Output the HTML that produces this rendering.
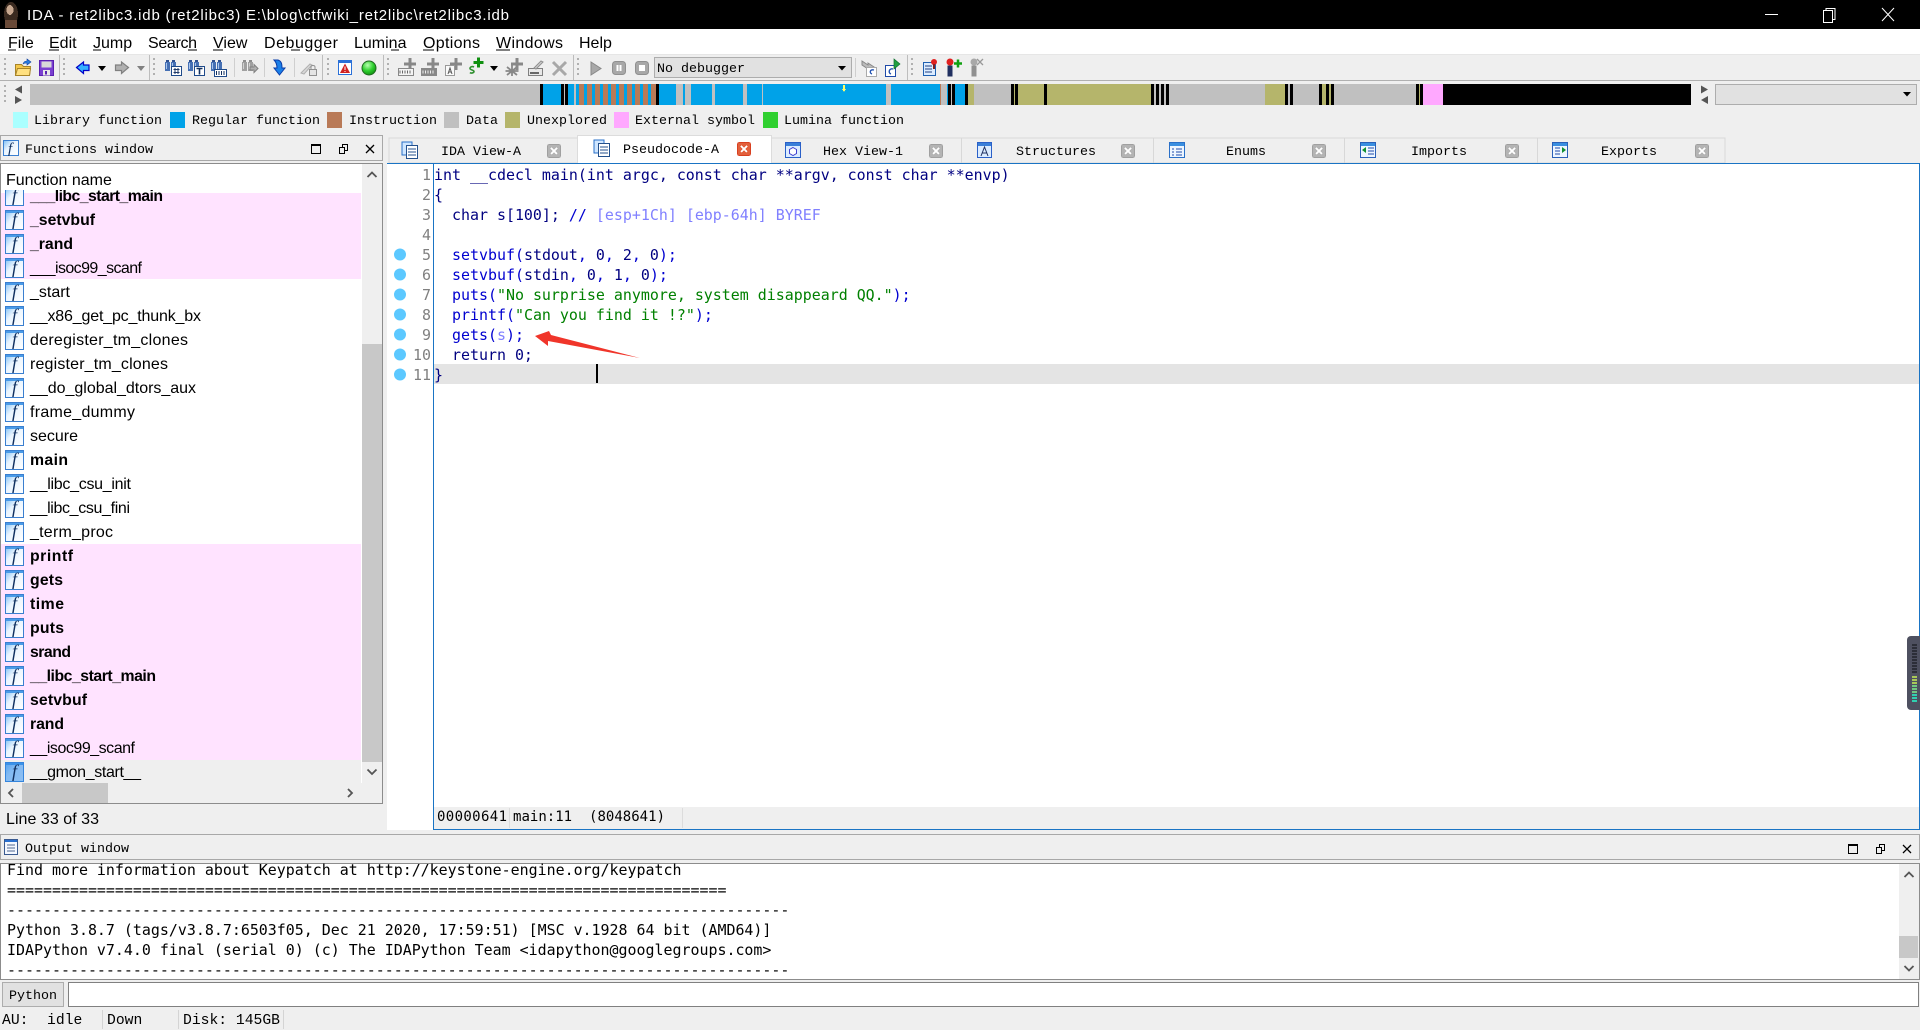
<!DOCTYPE html>
<html><head><meta charset="utf-8"><title>IDA</title>
<style>
html,body{margin:0;padding:0;width:1920px;height:1030px;overflow:hidden;background:#efefef}
svg{display:block;position:absolute;left:0;top:0}
text{white-space:pre}
.m{font:14.95px "DejaVu Sans Mono","Liberation Mono",monospace}
.l{font:13.33px "Liberation Mono",monospace;fill:#000}
.o{font:14.95px "DejaVu Sans Mono","Liberation Mono",monospace;fill:#000}
.s{font:16px "Liberation Sans",sans-serif;fill:#000}
.b{font:bold 15.8px "Liberation Sans",sans-serif;fill:#000}
.u{font:16px "Liberation Sans",sans-serif;fill:#000}
.f{font:italic 18px "Liberation Serif",serif;fill:#103060}
.n{fill:#808080;text-anchor:end}
.k{fill:#000080}.c{fill:#0000d0}.g{fill:#008000}.p{fill:#8080ff}
.a{fill:#c0c0c0}.B{fill:#00a2e8}.R{fill:#b97a57}.O{fill:#b5b56b}.K{fill:#000}
</style></head><body>
<svg width="1920" height="1030" viewBox="0 0 1920 1030" shape-rendering="crispEdges">
<defs>
<linearGradient id="fg" x1="0" y1="0" x2="1" y2="1"><stop offset="0" stop-color="#7fc0f4"/><stop offset=".4" stop-color="#e8f4ff"/><stop offset="1" stop-color="#ffffff"/></linearGradient>
<g id="fb"><rect x=".5" y=".5" width="18" height="19" fill="url(#fg)" stroke="#3a7fd0"/><rect x="1" y="1" width="17" height="2" fill="#4a9be8"/></g>
<g id="doc"><rect x="0" y="0" width="10" height="13" fill="#cfe6ff" stroke="#2a70c8"/><rect x="4.500" y="3.500" width="11" height="13" fill="#fff" stroke="#24508c"/><path d="M6 7h8M6 10h8M6 13h8" stroke="#24508c" fill="none"/></g>
<g id="cl"><rect x=".5" y=".5" width="13" height="13" rx="2" fill="#b4b4b4" stroke="#a0a0a0"/><path d="M4 4l6 6M10 4l-6 6" stroke="#fff" stroke-width="2" fill="none"/></g>
<g id="bin"><rect x="0" y="0" width="5" height="9" fill="#4670b4"/><rect x="6" y="0" width="5" height="9" fill="#4670b4"/><rect x="1" y="-2" width="3" height="2" fill="#2f5090"/><rect x="7" y="-2" width="3" height="2" fill="#2f5090"/><rect x="1" y="1" width="1" height="6" fill="#a8c4ec"/><rect x="7" y="1" width="1" height="6" fill="#a8c4ec"/></g>
<g id="plus"><path d="M-6 0h12M0 -6v12" stroke="#888" stroke-width="3" fill="none"/></g>
</defs>

<!-- title -->
<rect width="1920" height="29" fill="#000"/>
<ellipse cx="11" cy="14" rx="7" ry="12" fill="#3a2a20"/><ellipse cx="10" cy="10" rx="3.500" ry="5" fill="#c8a890"/><rect x="5" y="20" width="12" height="8" fill="#6a4a38"/>
<text x="27" y="20" textLength="482" style="font:15px 'Liberation Sans',sans-serif" fill="#fff">IDA - ret2libc3.idb (ret2libc3) E:\blog\ctfwiki_ret2libc\ret2libc3.idb</text>
<path d="M1765 14.500h13" stroke="#fff"/>
<path d="M1823.500 10.500h9v12h-9zM1826 10V8.500h9v11h-2" stroke="#fff" fill="none"/>
<path d="M1882 8l12 13M1894 8l-12 13" stroke="#fff" fill="none" shape-rendering="auto"/>

<!-- menu -->
<rect y="29" width="1920" height="25" fill="#fff"/>
<rect y="54" width="1920" height="1" fill="#e6e6e6"/>
<g class="u">
<text class="u" x="8" y="48">File</text><path d="M8 50h8" stroke="#000"/>
<text class="u" x="49" y="48">Edit</text><path d="M49 50h10" stroke="#000"/>
<text class="u" x="93" y="48">Jump</text><path d="M93 50h8" stroke="#000"/>
<text class="u" x="148" y="48" textLength="49">Search</text><path d="M188 50h9" stroke="#000"/>
<text class="u" x="213" y="48">View</text><path d="M213 50h10" stroke="#000"/>
<text class="u" x="264" y="48" textLength="74">Debugger</text><path d="M291 50h9" stroke="#000"/>
<text class="u" x="354" y="48">Lumina</text><path d="M391 50h8" stroke="#000"/>
<text class="u" x="423" y="48" textLength="57">Options</text><path d="M423 50h11" stroke="#000"/>
<text class="u" x="496" y="48" textLength="67">Windows</text><path d="M496 50h14" stroke="#000"/>
<text class="u" x="579" y="48">Help</text>
</g>

<!-- toolbar -->
<rect y="80" width="1920" height="1" fill="#b0b0b0"/>
<g stroke="#b4b4b4" fill="none">
<path d="M59.500 55v25M149.500 55v25M322.500 55v25M383.500 55v25M573.500 55v25M907.500 55v25" stroke="#bdbdbd"/>
<path d="M234.500 58v19M264.500 58v19M294.500 58v19M855.500 58v19" stroke="#cfcfcf"/>
</g>
<g stroke="#b0b0b0" stroke-width="2" stroke-dasharray="2 3" fill="none">
<path d="M5 58v20M64 58v20M154 58v20M328 58v20M388 58v20M578 58v20M912 58v20M5 85v20"/>
</g>
<g shape-rendering="auto">
<!-- folder -->
<path d="M15.500 64.500h6l2 2h7l-1 9h-14z" fill="#f4c84a" stroke="#a88428"/><path d="M15.500 75.500l2-7h13l-1 7z" fill="#ffe080" stroke="#a88428"/>
<path d="M23 64c1-3 3-3 4-3v-2l4 3-4 3v-2c-1 0-3 0-4 1z" fill="#2a7fe0" stroke="#1040a0" stroke-width=".6"/>
<!-- save -->
<rect x="39.500" y="60.500" width="14" height="15" fill="#7a3fd0" stroke="#5a20b0"/><rect x="41.500" y="61.500" width="10" height="6" fill="#d8d8d8"/><rect x="43" y="70" width="7" height="5.500" fill="#e8e8e8"/><rect x="45" y="71" width="2" height="3.500" fill="#5a20b0"/>
<!-- back / forward -->
<path d="M76.500 67.500l7-5.500v3h5.500v5.500h-5.500v3z" fill="#35b0ff" stroke="#0000c8" stroke-width="1.200"/>
<path d="M98 66h8l-4 5z" fill="#000"/>
<path d="M128.500 67.500l-7-5.500v3h-6v5.500h6v3z" fill="#b0b0b0" stroke="#808080" stroke-width="1.200"/>
<path d="M137 66h8l-4 5z" fill="#808080"/>
<!-- binoculars -->
<use href="#bin" x="165" y="62"/><rect x="171.500" y="66.500" width="10" height="9" fill="#fff" stroke="#1f4a8a"/><path d="M173.500 69.500h6M173.500 72.500h6M175 68v6M178 68v6" stroke="#1f3a6a"/>
<use href="#bin" x="188" y="62"/><rect x="194.500" y="66.500" width="10" height="9" fill="#fff" stroke="#1f4a8a"/><path d="M196.500 68.500h6M199.500 68.500v6" stroke="#123060" stroke-width="1.600"/>
<use href="#bin" x="211" y="62"/><rect x="214.500" y="69.500" width="12" height="7" fill="#fff" stroke="#1f4a8a"/><path d="M216.500 71v4M219 71v4M221.500 71v4M224 71v4" stroke="#123060"/>
<g style="filter:grayscale(1)" opacity=".6"><use href="#bin" x="242" y="62"/></g><path d="M250 67h4v-2.500l4 4-4 4v-2.500h-4z" fill="#b0b0b0" stroke="#808080"/>
<!-- down arrow -->
<path d="M274 60h4c3 1 4 3 4 8h3l-5.500 7-5.500-7h3c0-3-1-6-3-8z" fill="#1a7fe8" stroke="#0a3ca8"/>
<!-- pencil lock -->
<path d="M301 73l9-9 2 1-8 9z" fill="#d8d8d8" stroke="#b0b0b0"/><rect x="309.500" y="69.500" width="7" height="6" fill="#e4e4e4" stroke="#909090"/><path d="M311 69v-2c0-2 4-2 4 0v2" stroke="#909090" fill="none"/>
<!-- warn window -->
<rect x="338.500" y="60.500" width="13" height="14" fill="#fff" stroke="#2a70d8"/><rect x="339" y="61" width="12" height="2" fill="#2a70d8"/><path d="M345 63.500l5 9.500h-10z" fill="#d02020"/><path d="M345 66.500v3.500M345 71v1" stroke="#fff"/>
<!-- green -->
<radialGradient id="gr" cx=".4" cy=".3" r=".8"><stop offset="0" stop-color="#b8ffb0"/><stop offset=".5" stop-color="#30d030"/><stop offset="1" stop-color="#088008"/></radialGradient>
<circle cx="369" cy="68" r="7" fill="url(#gr)" stroke="#206820"/>
<!-- CODE DATA A -->
<use href="#plus" x="410" y="64"/><rect x="398.500" y="68.500" width="15" height="7" fill="#f4f4f4" stroke="#888"/><path d="M400 70.500v3M402.500 70.500v3M405 70.500v3M407.500 70.500v3M410 70.500v3" stroke="#666"/>
<use href="#plus" x="433" y="64"/><rect x="421.500" y="68.500" width="15" height="7" fill="#888" stroke="#888"/><path d="M423 70.500v3M425.500 70.500v3M428 70.500v3M430.500 70.500v3M433 70.500v3" stroke="#eee"/>
<use href="#plus" x="456" y="64"/><rect x="445.500" y="65.500" width="9" height="10" fill="#fafafa" stroke="#999"/><path d="M448 74l2-6 2 6M449 72h2" stroke="#555" fill="none"/>
<path d="M478.500 57.500v10M473.500 62.500h10" stroke="#109010" stroke-width="3" fill="none"/>
<path d="M474 67c-2-1-4 0-4 1.500s4 1.500 4 3-3 2-4 1" stroke="#309030" stroke-width="1.600" fill="none"/>
<path d="M490 66h8l-4 5z" fill="#000"/>
<use href="#plus" x="517" y="64"/><path d="M507 67l10 8M517 67l-10 8M512 65v11M505.500 71h13" stroke="#888" stroke-width="1.800" fill="none"/>
<path d="M528.500 68.500h14v7h-14z" fill="#e8e8e8" stroke="#808080"/><path d="M530 73h9" stroke="#666" stroke-width="2"/><path d="M534 68l7-7 2 1-7 7z" fill="#d0d0d0" stroke="#909090"/>
<path d="M553 62l13 13M566 62l-13 13" stroke="#a8a8a8" stroke-width="3" fill="none"/>
<!-- debugger -->
<path d="M591 62v13l10-6.500z" fill="#a8a8a8" stroke="#888"/>
<rect x="612.500" y="61.500" width="13" height="13" rx="3" fill="#a8a8a8" stroke="#909090"/><path d="M617.500 65v6M620.500 65v6" stroke="#fff" stroke-width="2"/>
<rect x="635.500" y="61.500" width="13" height="13" rx="3" fill="#a8a8a8" stroke="#909090"/><rect x="639" y="65" width="6" height="6" fill="#fff"/>
<path d="M862 61l6 4v-2l6 4-6 4v-2l-6-4z" fill="#bbb" stroke="#888"/><rect x="866.500" y="67.500" width="10" height="9" fill="#fff" stroke="#aaa"/><path d="M874 70c-4-1-5 3-2 4" stroke="#2050b0" stroke-width="1.300" fill="none"/>
<rect x="885.500" y="65.500" width="10" height="11" fill="#fff" stroke="#1f4aa8"/><path d="M893 69c-4-1-5 4-2 5" stroke="#2050b0" stroke-width="1.400" fill="none"/><path d="M894 59v10l6-5z" fill="#20a040" stroke="#107030" stroke-width=".7"/>
<rect x="923.500" y="62.500" width="12" height="13" fill="#dcecff" stroke="#2060b0"/><path d="M925 66h7M925 69h7M925 72h7" stroke="#204080"/><circle cx="934" cy="62" r="3" fill="#e02020"/><path d="M934 64v5" stroke="#802020" stroke-width="2"/>
<circle cx="950" cy="62" r="3.500" fill="#e02020"/><rect x="947.500" y="65.500" width="5" height="11" fill="#203060"/><path d="M958 59.500v8M954 63.500h8" stroke="#10a010" stroke-width="2.500" fill="none"/>
<circle cx="974" cy="62" r="3.500" fill="#a8a8a8"/><rect x="971.500" y="65.500" width="5" height="11" fill="#909090"/><path d="M977 59l6 6M983 59l-6 6" stroke="#999" stroke-width="1.300" fill="none"/>
</g>
<rect x="654.500" y="57.500" width="197" height="20" fill="#e1e1e1" stroke="#adadad"/>
<text class="l" x="657" y="72">No debugger</text>
<path d="M838 66h8l-4 4.500z" fill="#000" shape-rendering="auto"/>

<!-- nav -->
<path d="M22 85.500v8l-7-4z" fill="#555" shape-rendering="auto"/><path d="M15 96v8l7-4z" fill="#555" shape-rendering="auto"/>
<rect x="30" y="84" width="1661" height="21" class="a"/>
<g>
<path class="B" d="M543 84h18v21h-18zM568 84h6v21h-6zM576 84h80v21h-80zM659 84h17v21h-17zM683 84h2v21h-2zM691 84h21v21h-21zM715 84h28v21h-28zM747 84h15v21h-15zM763 84h123v21h-123zM891 84h49v21h-49zM947 84h1v21h-1zM955 84h10v21h-10z"/>
<path class="R" d="M579 84h5v21h-5zM587 84h5v21h-5zM595 84h5v21h-5zM603 84h5v21h-5zM611 84h5v21h-5zM619 84h5v21h-5zM627 84h5v21h-5zM635 84h5v21h-5zM643 84h5v21h-5zM651 84h5v21h-5zM940 84h1v21h-1z"/>
<path class="O" d="M968 84h6v21h-6zM1014 84h1v21h-1zM1018 84h133v21h-133zM1265 84h20v21h-20zM1322 84h9v21h-9zM1419 84h1v21h-1z"/>
<path class="K" d="M540 84h3v21h-3zM561 84h3v21h-3zM565 84h3v21h-3zM656 84h3v21h-3zM948 84h3v21h-3zM952 84h3v21h-3zM965 84h3v21h-3zM1011 84h3v21h-3zM1015 84h3v21h-3zM1044 84h3v21h-3zM1151 84h3v21h-3zM1156 84h3v21h-3zM1161 84h3v21h-3zM1166 84h3v21h-3zM1285 84h3v21h-3zM1290 84h3v21h-3zM1319 84h3v21h-3zM1326 84h3v21h-3zM1331 84h3v21h-3zM1416 84h3v21h-3zM1420 84h3v21h-3zM1443 84h248v21h-248z"/>
<path d="M1423 84h20v21h-20z" fill="#ffa8ff"/>
<path d="M843 85h2v4h1l-2 3-2-3h1z" fill="#ffff66"/>
</g>
<path d="M1701 85.500v8l7-4z" fill="#555" shape-rendering="auto"/><path d="M1708 96v8l-7-4z" fill="#555" shape-rendering="auto"/>
<rect x="1715.500" y="84.500" width="201" height="20" fill="#e1e1e1" stroke="#adadad"/>
<path d="M1903 92h8l-4 4.500z" fill="#000" shape-rendering="auto"/>

<!-- legend -->
<rect x="13" y="112" width="15" height="16" fill="#aaffff"/><text class="l" x="34" y="124">Library function</text>
<rect x="170" y="112" width="15" height="16" fill="#00a2e8"/><text class="l" x="192" y="124">Regular function</text>
<rect x="327" y="112" width="15" height="16" fill="#b97a57"/><text class="l" x="349" y="124">Instruction</text>
<rect x="444" y="112" width="15" height="16" fill="#c0c0c0"/><text class="l" x="466" y="124">Data</text>
<rect x="505" y="112" width="15" height="16" fill="#b5b56b"/><text class="l" x="527" y="124">Unexplored</text>
<rect x="614" y="112" width="15" height="16" fill="#ffa8ff"/><text class="l" x="635" y="124">External symbol</text>
<rect x="763" y="112" width="15" height="16" fill="#30d030"/><text class="l" x="784" y="124">Lumina function</text>

<!-- functions window -->
<rect x=".5" y="135.500" width="382" height="25" fill="#efefef" stroke="#a8a8a8"/>
<g shape-rendering="auto"><rect x="3.500" y="140.500" width="15" height="15" fill="url(#fg)" stroke="#3a7fd0"/><text class="f" x="8" y="153" style="font-size:15px">f</text></g>
<text class="l" x="25" y="153">Functions window</text>
<path d="M311.500 144.500h9v9h-9zM311 145.500h10" stroke="#000" fill="none"/>
<path d="M339.500 147.500h5v6h-5zM342.500 147v-2.500h5v6h-3" stroke="#000" fill="none"/>
<path d="M366 145l8 8M374 145l-8 8" stroke="#000" stroke-width="1.300" fill="none" shape-rendering="auto"/>

<rect x=".5" y="163.500" width="382" height="640" fill="#fff" stroke="#8c8c8c"/>
<rect x="1" y="193" width="360" height="86" fill="#ffe3ff"/>
<rect x="1" y="544" width="360" height="216" fill="#ffe3ff"/>
<rect x="1" y="760" width="360" height="23" fill="#efefef"/>
<rect x="362" y="164" width="20" height="619" fill="#efefef"/>
<rect x="362" y="344" width="20" height="418" fill="#c8c8c8"/>
<rect x="1" y="783" width="381" height="20" fill="#efefef"/>
<rect x="22" y="783" width="86" height="20" fill="#c8c8c8"/>
<g fill="none" stroke="#555" stroke-width="1.800" shape-rendering="auto">
<path d="M367.500 177l4.500-4.500 4.500 4.500M367.500 769.500l4.500 4.500 4.500-4.500M13 789l-4 4 4 4M348 789l4 4-4 4"/>
</g>
<g shape-rendering="auto">
<svg x="0" y="190" width="362" height="600" viewBox="0 190 362 600" overflow="hidden">
<use href="#fb" x="5" y="186"/><text class="f" x="12" y="201">f</text><text class="b" x="30" y="201" textLength="133">___libc_start_main</text>
</svg>
<use href="#fb" x="5" y="210"/><text class="f" x="12" y="225">f</text><text class="b" x="30" y="225" textLength="65">_setvbuf</text>
<use href="#fb" x="5" y="234"/><text class="f" x="12" y="249">f</text><text class="b" x="30" y="249" textLength="43">_rand</text>
<use href="#fb" x="5" y="258"/><text class="f" x="12" y="273">f</text><text class="s" x="30" y="273" textLength="112">___isoc99_scanf</text>
<use href="#fb" x="5" y="282"/><text class="f" x="12" y="297">f</text><text class="s" x="30" y="297" textLength="40">_start</text>
<use href="#fb" x="5" y="306"/><text class="f" x="12" y="321">f</text><text class="s" x="30" y="321" textLength="171">__x86_get_pc_thunk_bx</text>
<use href="#fb" x="5" y="330"/><text class="f" x="12" y="345">f</text><text class="s" x="30" y="345" textLength="158">deregister_tm_clones</text>
<use href="#fb" x="5" y="354"/><text class="f" x="12" y="369">f</text><text class="s" x="30" y="369" textLength="138">register_tm_clones</text>
<use href="#fb" x="5" y="378"/><text class="f" x="12" y="393">f</text><text class="s" x="30" y="393" textLength="166">__do_global_dtors_aux</text>
<use href="#fb" x="5" y="402"/><text class="f" x="12" y="417">f</text><text class="s" x="30" y="417" textLength="105">frame_dummy</text>
<use href="#fb" x="5" y="426"/><text class="f" x="12" y="441">f</text><text class="s" x="30" y="441" textLength="48">secure</text>
<use href="#fb" x="5" y="450"/><text class="f" x="12" y="465">f</text><text class="b" x="30" y="465" textLength="38">main</text>
<use href="#fb" x="5" y="474"/><text class="f" x="12" y="489">f</text><text class="s" x="30" y="489" textLength="101">__libc_csu_init</text>
<use href="#fb" x="5" y="498"/><text class="f" x="12" y="513">f</text><text class="s" x="30" y="513" textLength="100">__libc_csu_fini</text>
<use href="#fb" x="5" y="522"/><text class="f" x="12" y="537">f</text><text class="s" x="30" y="537" textLength="83">_term_proc</text>
<use href="#fb" x="5" y="546"/><text class="f" x="12" y="561">f</text><text class="b" x="30" y="561" textLength="43">printf</text>
<use href="#fb" x="5" y="570"/><text class="f" x="12" y="585">f</text><text class="b" x="30" y="585" textLength="33">gets</text>
<use href="#fb" x="5" y="594"/><text class="f" x="12" y="609">f</text><text class="b" x="30" y="609" textLength="34">time</text>
<use href="#fb" x="5" y="618"/><text class="f" x="12" y="633">f</text><text class="b" x="30" y="633" textLength="34">puts</text>
<use href="#fb" x="5" y="642"/><text class="f" x="12" y="657">f</text><text class="b" x="30" y="657" textLength="41">srand</text>
<use href="#fb" x="5" y="666"/><text class="f" x="12" y="681">f</text><text class="b" x="30" y="681" textLength="126">__libc_start_main</text>
<use href="#fb" x="5" y="690"/><text class="f" x="12" y="705">f</text><text class="b" x="30" y="705" textLength="57">setvbuf</text>
<use href="#fb" x="5" y="714"/><text class="f" x="12" y="729">f</text><text class="b" x="30" y="729" textLength="34">rand</text>
<use href="#fb" x="5" y="738"/><text class="f" x="12" y="753">f</text><text class="s" x="30" y="753" textLength="105">__isoc99_scanf</text>
<use href="#fb" x="5" y="762"/><rect x="5" y="762" width="19" height="20" fill="#2f8be8" opacity=".55"/><text class="f" x="12" y="777">f</text><text class="s" x="30" y="777" textLength="111">__gmon_start__</text>
</g>
<rect x="1" y="164" width="361" height="26" fill="#fff"/>
<text class="u" x="6" y="185">Function name</text>
<text class="u" x="6" y="824" textLength="93">Line 33 of 33</text>

<!-- tabs -->
<rect x="389" y="138" width="1336" height="25" fill="#efefef" stroke="#d8d8d8"/>
<path d="M771.500 138v25M961.500 138v25M1153.500 138v25M1344.500 138v25M1537.500 138v25" stroke="#d8d8d8"/>
<rect x="577.500" y="135.500" width="194" height="28" fill="#fff" stroke="#dcdcdc"/>
<g shape-rendering="auto">
<use href="#doc" x="402" y="142"/>
<use href="#doc" x="594" y="140"/>
<rect x="785.500" y="142.500" width="15" height="15" fill="#dcecff" stroke="#2a60c8"/><rect x="786" y="143" width="14" height="3" fill="#3a7fd8"/><path d="M793 147.500l3.500 2v4l-3.500 2-3.500-2v-4z" fill="#fff" stroke="#4040d0"/>
<rect x="977.500" y="142.500" width="14" height="15" fill="#dcecff" stroke="#2a60c8"/><rect x="978" y="143" width="13" height="3" fill="#3a7fd8"/><path d="M981 156l3.500-9 3.500 9M982 153h5" fill="none" stroke="#203060"/>
<rect x="1169.500" y="142.500" width="15" height="15" fill="#eef6ff" stroke="#2a70c8"/><rect x="1170" y="143" width="14" height="3" fill="#3a8fe0"/><path d="M1172 149h2M1176 149h6M1172 152h2M1176 152h6M1172 155h2M1176 155h6" stroke="#1f4aa8"/>
<rect x="1360.500" y="142.500" width="15" height="15" fill="#eef6ff" stroke="#2a60b8"/><rect x="1361" y="143" width="14" height="3" fill="#3a8fe0"/><path d="M1368 148h6M1368 151h6M1368 154h6" stroke="#1f4aa8"/><path d="M1366 147l-4 3 4 3z" fill="#109030"/>
<rect x="1552.500" y="142.500" width="15" height="15" fill="#eef6ff" stroke="#2a60b8"/><rect x="1553" y="143" width="14" height="3" fill="#3a8fe0"/><path d="M1555 148h5M1555 151h5M1555 154h5" stroke="#1f4aa8"/><path d="M1562 147l4 3-4 3z" fill="#109030"/>
</g>
<text class="l" x="441" y="155">IDA View-A</text>
<text class="l" x="623" y="153">Pseudocode-A</text>
<text class="l" x="823" y="155">Hex View-1</text>
<text class="l" x="1016" y="155">Structures</text>
<text class="l" x="1226" y="155">Enums</text>
<text class="l" x="1411" y="155">Imports</text>
<text class="l" x="1601" y="155">Exports</text>
<use href="#cl" x="547" y="144"/>
<g transform="translate(737 142)"><rect x=".5" y=".5" width="13" height="13" rx="2" fill="#e2603c" stroke="#d84020"/><path d="M4 4l6 6M10 4l-6 6" stroke="#fff" stroke-width="2" fill="none"/></g>
<use href="#cl" x="929" y="144"/><use href="#cl" x="1121" y="144"/><use href="#cl" x="1312" y="144"/><use href="#cl" x="1505" y="144"/><use href="#cl" x="1695" y="144"/>

<!-- code -->
<rect x="387" y="164" width="1533" height="666" fill="#fff"/>
<rect x="387" y="163" width="1533" height="1" fill="#1a74c4"/>
<rect x="433" y="163" width="1" height="667" fill="#1a74c4"/>
<rect x="1919" y="163" width="1" height="667" fill="#1a74c4"/>
<rect x="433" y="829" width="1487" height="1" fill="#1a74c4"/>
<rect x="434" y="364" width="1485" height="20" fill="#e4e4e4"/>
<rect x="596" y="364" width="2" height="19" fill="#000"/>
<g fill="#5cc8ff" shape-rendering="auto">
<circle cx="400" cy="254.500" r="6"/><circle cx="400" cy="274.500" r="6"/><circle cx="400" cy="294.500" r="6"/><circle cx="400" cy="314.500" r="6"/><circle cx="400" cy="334.500" r="6"/><circle cx="400" cy="354.500" r="6"/><circle cx="400" cy="374.500" r="6"/>
</g>
<g shape-rendering="auto">
<text class="m n" x="431" y="180">1</text><text class="m n" x="431" y="200">2</text><text class="m n" x="431" y="220">3</text><text class="m n" x="431" y="240">4</text><text class="m n" x="431" y="260">5</text><text class="m n" x="431" y="280">6</text><text class="m n" x="431" y="300">7</text><text class="m n" x="431" y="320">8</text><text class="m n" x="431" y="340">9</text><text class="m n" x="431" y="360">10</text><text class="m n" x="431" y="380">11</text>
<text class="m k" x="434" y="180">int __cdecl main(int argc, const char **argv, const char **envp)</text>
<text class="m k" x="434" y="200">{</text>
<text class="m k" x="434" y="220">  char s[100]; <tspan class="c">// </tspan><tspan class="p">[esp+1Ch] [ebp-64h] BYREF</tspan></text>
<text class="m k" x="434" y="260">  <tspan class="c">setvbuf(</tspan>stdout<tspan class="c">, </tspan>0<tspan class="c">, </tspan>2<tspan class="c">, </tspan>0<tspan class="c">);</tspan></text>
<text class="m k" x="434" y="280">  <tspan class="c">setvbuf(</tspan>stdin<tspan class="c">, </tspan>0<tspan class="c">, </tspan>1<tspan class="c">, </tspan>0<tspan class="c">);</tspan></text>
<text class="m k" x="434" y="300">  <tspan class="c">puts(</tspan><tspan class="g">"No surprise anymore, system disappeard QQ."</tspan><tspan class="c">);</tspan></text>
<text class="m k" x="434" y="320">  <tspan class="c">printf(</tspan><tspan class="g">"Can you find it !?"</tspan><tspan class="c">);</tspan></text>
<text class="m k" x="434" y="340">  <tspan class="c">gets(</tspan><tspan class="p">s</tspan><tspan class="c">);</tspan></text>
<text class="m k" x="434" y="360">  return 0;</text>
<text class="m k" x="434" y="380">}</text>
<path d="M535 336L549 331L551 335L640 358L548 341L548 346z" fill="#f0352a"/>
</g>
<rect x="434" y="807" width="1485" height="22" fill="#efefef"/>
<path d="M509.500 808v20M682.500 808v20" stroke="#dcdcdc"/>
<text x="437" y="821" style="font:14px 'DejaVu Sans Mono','Liberation Mono',monospace" textLength="70" fill="#000">00000641</text>
<text x="513" y="821" style="font:14px 'DejaVu Sans Mono','Liberation Mono',monospace" textLength="152" fill="#000">main:11  (8048641)</text>

<!-- volume widget -->
<g shape-rendering="auto">
<path d="M1920 636h-9a4 4 0 0 0-4 4v66a4 4 0 0 0 4 4h9z" fill="#4e5060"/>
</g>
<path d="M1912 645h5M1912 648h5M1912 651h5M1912 654h5M1912 657h5M1912 660h5M1912 663h5M1912 666h5M1912 669h5M1912 672h5" stroke="#2c2e38" stroke-width="2"/>
<path d="M1912 677h5M1912 680h5M1912 683h5" stroke="#a8c858" stroke-width="2"/><path d="M1912 686h5M1912 689h5M1912 692h5" stroke="#70c880" stroke-width="2"/><path d="M1912 695h5M1912 698h5M1912 701h5" stroke="#30d0b0" stroke-width="2"/>

<!-- output -->
<rect x=".5" y="834.500" width="1919" height="25" fill="#efefef" stroke="#a8a8a8"/>
<g shape-rendering="auto"><rect x="4.500" y="839.500" width="13" height="15" fill="#f4f8ff" stroke="#3a5a90"/><rect x="5" y="840" width="12" height="2" fill="#2a70d0"/><path d="M7 845h8M7 848h8M7 851h8" stroke="#506890"/></g>
<text class="l" x="25" y="852">Output window</text>
<path d="M1848.500 844.500h9v9h-9zM1848 845.500h10" stroke="#000" fill="none"/>
<path d="M1876.500 847.500h5v6h-5zM1879.500 847v-2.500h5v6h-3" stroke="#000" fill="none"/>
<path d="M1903 845l8 8M1911 845l-8 8" stroke="#000" stroke-width="1.300" fill="none" shape-rendering="auto"/>
<rect x=".5" y="863.500" width="1919" height="116" fill="#fff" stroke="#8c8c8c"/>
<rect x="1899" y="864" width="20" height="115" fill="#efefef"/>
<rect x="1899" y="936" width="19" height="22" fill="#c8c8c8"/>
<g fill="none" stroke="#555" stroke-width="1.800" shape-rendering="auto"><path d="M1904.500 877l4.500-4.500 4.500 4.500M1904.500 966l4.500 4.500 4.500-4.500"/></g>
<g shape-rendering="auto">
<text class="o" x="7" y="875">Find more information about Keypatch at http://keystone-engine.org/keypatch</text>
<text class="o" x="7" y="895">================================================================================</text>
<text class="o" x="7" y="915">---------------------------------------------------------------------------------------</text>
<text class="o" x="7" y="935">Python 3.8.7 (tags/v3.8.7:6503f05, Dec 21 2020, 17:59:51) [MSC v.1928 64 bit (AMD64)]</text>
<text class="o" x="7" y="955">IDAPython v7.4.0 final (serial 0) (c) The IDAPython Team &lt;idapython@googlegroups.com&gt;</text>
<text class="o" x="7" y="975">---------------------------------------------------------------------------------------</text>
</g>
<rect x="2.500" y="982.500" width="61" height="24" fill="#e1e1e1" stroke="#adadad"/>
<text class="l" x="9" y="999">Python</text>
<rect x="68.500" y="982.500" width="1850" height="24" fill="#fff" stroke="#808080"/>

<!-- status -->
<g style="font:14.7px 'Liberation Mono',monospace" fill="#000">
<text x="2" y="1024">AU:</text><text x="47" y="1024">idle</text><text x="107" y="1024">Down</text><text x="183" y="1024">Disk: 145GB</text>
</g>
<path d="M102.500 1010v19M178.500 1010v19M283.500 1010v19" stroke="#d4d4d4"/>
</svg>
</body></html>
